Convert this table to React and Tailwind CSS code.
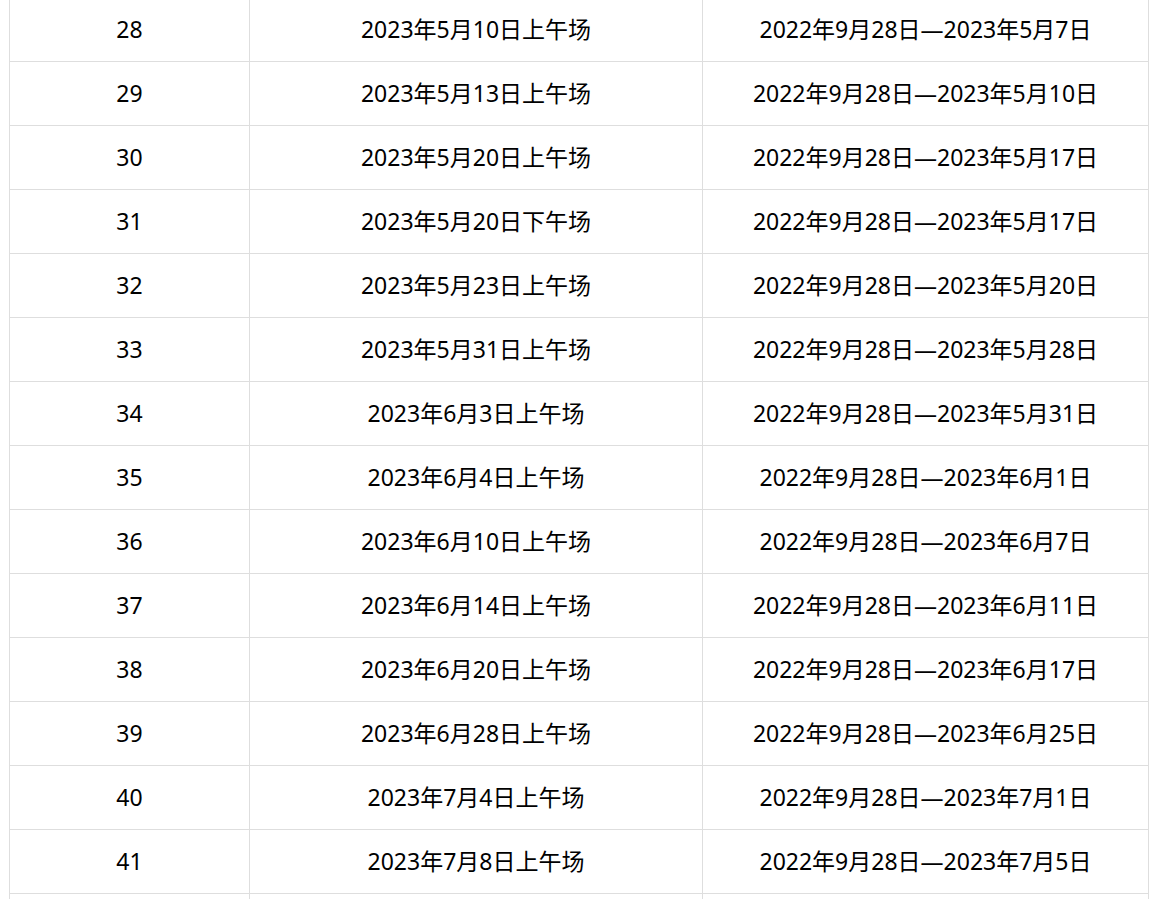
const rows = [
  ["28", "2023年5月10日上午场", "2022年9月28日—2023年5月7日"],
  ["29", "2023年5月13日上午场", "2022年9月28日—2023年5月10日"],
  ["30", "2023年5月20日上午场", "2022年9月28日—2023年5月17日"],
  ["31", "2023年5月20日下午场", "2022年9月28日—2023年5月17日"],
  ["32", "2023年5月23日上午场", "2022年9月28日—2023年5月20日"],
  ["33", "2023年5月31日上午场", "2022年9月28日—2023年5月28日"],
  ["34", "2023年6月3日上午场", "2022年9月28日—2023年5月31日"],
  ["35", "2023年6月4日上午场", "2022年9月28日—2023年6月1日"],
  ["36", "2023年6月10日上午场", "2022年9月28日—2023年6月7日"],
  ["37", "2023年6月14日上午场", "2022年9月28日—2023年6月11日"],
  ["38", "2023年6月20日上午场", "2022年9月28日—2023年6月17日"],
  ["39", "2023年6月28日上午场", "2022年9月28日—2023年6月25日"],
  ["40", "2023年7月4日上午场", "2022年9月28日—2023年7月1日"],
  ["41", "2023年7月8日上午场", "2022年9月28日—2023年7月5日"],
  ["", "", ""],
];

export default function App() {
  return (
    <div
      className="w-[1161px] h-[899px] overflow-hidden bg-white pl-[9px]"
      style={{ fontFamily: '"Noto Sans", "Noto Sans CJK SC", sans-serif' }}
    >
      <div className="-mt-[3px] w-[1140px] border-t border-l border-[#dedede] text-[23px] text-black">
        {rows.map((r, i) => (
          <div key={i} className="flex h-[64px] border-b border-[#dedede]">
            <div className="w-[240px] border-r border-[#dedede] flex items-center justify-center">{r[0]}</div>
            <div className="w-[453px] border-r border-[#dedede] flex items-center justify-center">{r[1]}</div>
            <div className="w-[446px] border-r border-[#dedede] flex items-center justify-center">{r[2]}</div>
          </div>
        ))}
      </div>
    </div>
  );
}
